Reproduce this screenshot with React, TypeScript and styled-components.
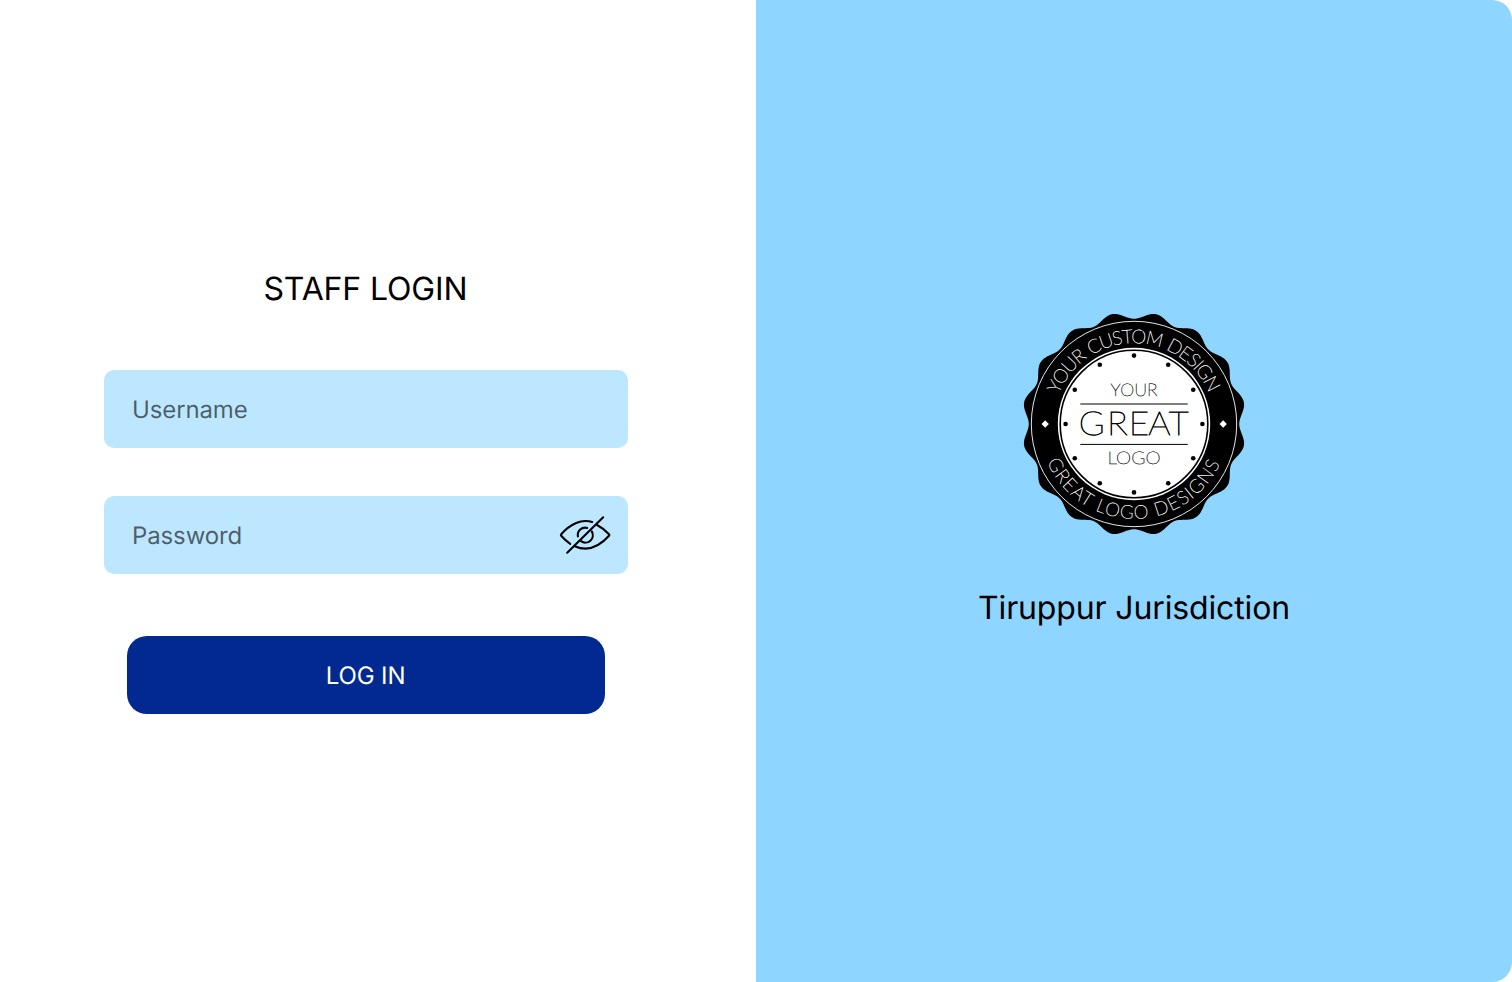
import React from "react";
import styled, { createGlobalStyle } from "styled-components";

const GlobalStyle = createGlobalStyle`
  * { box-sizing: border-box; }
  body {
    margin: 0;
    background: #ffffff;
    font-family: Inter, "Liberation Sans", sans-serif;
    color: #000000;
    text-rendering: geometricPrecision;
    -webkit-font-smoothing: antialiased;
  }
  input, button { text-rendering: inherit; }
`;

const Page = styled.main`
  display: grid;
  grid-template-columns: 1fr 1fr;
  height: 100vh;
  min-height: 700px;
`;

const LoginPanel = styled.section`
  display: flex;
  flex-direction: column;
  padding: 269px 128px 0 104px;
`;

const Title = styled.h1`
  margin: 0;
  padding-right: 1px;
  font-size: 32px;
  font-weight: 400;
  line-height: 39px;
  letter-spacing: -0.13px;
  text-align: center;
`;

const Form = styled.form`
  display: flex;
  flex-direction: column;
  gap: 48px;
  margin-top: 62px;
`;

const Field = styled.label`
  display: flex;
  align-items: center;
  height: 78px;
  padding: 0 17px 0 28px;
  border-radius: 10px;
  background: #bde7ff;
`;

const Input = styled.input`
  flex: 1;
  min-width: 0;
  padding: 0;
  border: 0;
  outline: 0;
  background: transparent;
  font: 400 24px/29px Inter, "Liberation Sans", sans-serif;
  letter-spacing: -0.12px;
  color: #000000;
  &::placeholder { color: rgba(0, 0, 0, 0.6); opacity: 1; }
`;

const IconButton = styled.button`
  display: flex;
  padding: 0;
  border: 0;
  background: none;
  color: #000000;
`;

const SubmitButton = styled.button`
  height: 78px;
  margin: 14px 23px 0;
  padding: 0 1px 0 0;
  border: 0;
  border-radius: 20px;
  background: #02298f;
  color: #ffffff;
  font: 400 24px/29px Inter, "Liberation Sans", sans-serif;
  letter-spacing: -0.12px;
`;

const BrandPanel = styled.section`
  display: flex;
  flex-direction: column;
  align-items: center;
  padding-top: 304px;
  border-radius: 0 20px 20px 0;
  background: #8ed5ff;
`;

const BrandName = styled.p`
  margin: 44px 0 0;
  font-size: 32px;
  line-height: 39px;
  letter-spacing: -0.14px;
`;

const BadgeText = styled.text`
  font-family: Lato, "Liberation Sans", sans-serif;
  font-weight: 100;
`;

const scallop = Array.from({ length: 361 }, (_, i) => {
  const a = (i * Math.PI) / 180;
  const r = 108.6 - 3.4 * Math.cos(16 * a);
  return `${i ? "L" : "M"}${(r * Math.sin(a)).toFixed(2)} ${(-r * Math.cos(a)).toFixed(2)}`;
}).join("") + "Z";

const dots = Array.from({ length: 12 }, (_, i) => {
  const a = (i * Math.PI) / 6;
  return { x: 68.4 * Math.sin(a), y: -68.4 * Math.cos(a) };
});

function Badge() {
  return (
    <svg width="240" height="240" viewBox="-120 -120 240 240" role="img" aria-label="Logo">
      <defs>
        <path id="topArc" d="M-81 0A81 81 0 0 1 81 0" />
        <path id="bottomArc" d="M-94.7 0A94.7 94.7 0 0 0 94.7 0" />
      </defs>
      <path d={scallop} fill="#000" />
      <circle r="102.7" fill="none" stroke="#fff" strokeWidth="0.9" />
      <circle r="76.2" fill="#fff" />
      <circle r="73.8" fill="none" stroke="#000" strokeWidth="1.6" />
      {dots.map((d, i) => <circle key={i} cx={d.x} cy={d.y} r="2.3" fill="#000" />)}
      <path d="M-92.5 0L-88.8-3.7L-85.1 0L-88.8 3.7ZM85.5 0L89.2-3.7L92.9 0L89.2 3.7Z" fill="#fff" />
      <path d="M-53.7-20H53.7M-53.7 20.4H53.7" stroke="#000" strokeWidth="1" />
      <BadgeText fontSize="18.9" wordSpacing="1.5" fill="#fff" stroke="#fff" strokeWidth="0.4">
        <textPath href="#topArc" startOffset="30.5" textLength="192">YOUR CUSTOM DESIGN</textPath>
      </BadgeText>
      <BadgeText fontSize="18.6" fill="#fff" stroke="#fff" strokeWidth="0.4">
        <textPath href="#bottomArc" startOffset="39" textLength="217">GREAT LOGO DESIGNS</textPath>
      </BadgeText>
      <BadgeText x="-23.5" y="-28.3" fontSize="17.5" textLength="47" lengthAdjust="spacingAndGlyphs" stroke="#000" strokeWidth="0.35">YOUR</BadgeText>
      <BadgeText transform="scale(1.06 1)" x="-52.2 -25.5 -5 13.4 32.8" y="10.8" fontSize="33" stroke="#000" strokeWidth="0.8">GREAT</BadgeText>
      <BadgeText x="-26.5" y="40.4" fontSize="17.5" textLength="53" lengthAdjust="spacingAndGlyphs" stroke="#000" strokeWidth="0.35">LOGO</BadgeText>
    </svg>
  );
}

function EyeOffIcon() {
  return (
    <svg width="52" height="40" viewBox="0 0 52 40" fill="none" stroke="currentColor" strokeWidth="2.1" strokeLinecap="round" strokeLinejoin="round">
      <path d="M33.2 7C22 3.5 10.5 9.5 2.2 19.3C1.8 19.8 1.8 20.3 2.2 20.8C5 24 8 26.7 11.2 28.8" />
      <path d="M37.7 9.7C42.5 12.2 46.8 15.8 50 19.3C50.4 19.8 50.4 20.3 50 20.8C39.5 32.5 27.5 36.5 15.8 31.2" />
      <path d="M28.2 12.9A7.4 7.4 0 0 0 18.9 21.4" />
      <path d="M32.8 16.4A7.4 7.4 0 0 1 22 26.1" />
      <path d="M44.2 2.3L8.2 37.7" />
    </svg>
  );
}

export default function App() {
  return (
    <>
      <GlobalStyle />
      <Page>
        <LoginPanel>
          <Title>STAFF LOGIN</Title>
          <Form>
            <Field><Input placeholder="Username" aria-label="Username" /></Field>
            <Field>
              <Input type="password" placeholder="Password" aria-label="Password" />
              <IconButton type="button" aria-label="Show password"><EyeOffIcon /></IconButton>
            </Field>
            <SubmitButton type="button">LOG IN</SubmitButton>
          </Form>
        </LoginPanel>
        <BrandPanel>
          <Badge />
          <BrandName>Tiruppur Jurisdiction</BrandName>
        </BrandPanel>
      </Page>
    </>
  );
}
